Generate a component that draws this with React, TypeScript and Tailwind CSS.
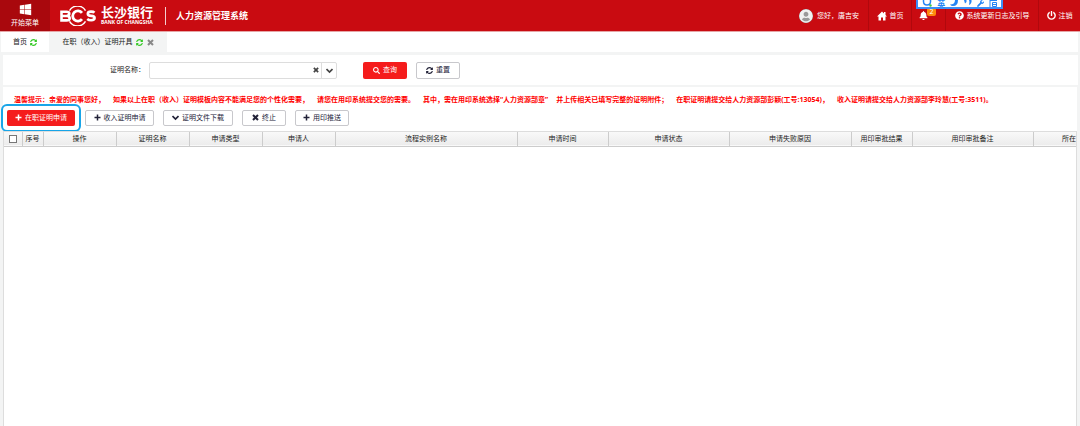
import { FaWindows, FaBell, FaQuestionCircle, FaPowerOff, FaSearch, FaSyncAlt, FaUserCircle, FaWrench } from 'react-icons/fa'

type IconProps = { className?: string }

function PlusIcon({ className }: IconProps) {
  return (
    <svg viewBox="0 0 14 14" className={className} fill="none" stroke="currentColor" strokeWidth="3">
      <path d="M7 1v12M1 7h12" />
    </svg>
  )
}

function CrossIcon({ className }: IconProps) {
  return (
    <svg viewBox="0 0 14 14" className={className} fill="none" stroke="currentColor" strokeWidth="4">
      <path d="M2 2l10 10M12 2L2 12" />
    </svg>
  )
}

function ChevronIcon({ className }: IconProps) {
  return (
    <svg viewBox="0 0 14 14" className={className} fill="none" stroke="currentColor" strokeWidth="3.4">
      <path d="M1 4l6 6 6-6" />
    </svg>
  )
}

function HomeIcon({ className }: IconProps) {
  return (
    <svg viewBox="0 0 20 20" className={className} fill="currentColor">
      <path d="M10 1L0 11h3v8h5v-6h4v6h5v-8h3l-3-3V2h-3v3z" />
    </svg>
  )
}

const columns = [
  { title: '序号', width: 'w-[21px]' },
  { title: '操作', width: 'w-[73px]' },
  { title: '证明名称', width: 'w-[73px]' },
  { title: '申请类型', width: 'w-[73px]' },
  { title: '申请人', width: 'w-[73px]' },
  { title: '流程实例名称', width: 'w-[182px]' },
  { title: '申请时间', width: 'w-[91px]' },
  { title: '申请状态', width: 'w-[121px]' },
  { title: '申请失败原因', width: 'w-[122px]' },
  { title: '用印审批结果', width: 'w-[61px]' },
  { title: '用印审批备注', width: 'w-[121px]' },
]

const actions = [
  { label: '收入证明申请', icon: PlusIcon, width: 'w-[69px]' },
  { label: '证明文件下载', icon: ChevronIcon, width: 'w-[70px]' },
  { label: '终止', icon: CrossIcon, width: 'w-[44px]' },
  { label: '用印推送', icon: PlusIcon, width: 'w-[54px]' },
]

const tips = [
  '温馨提示：亲爱的同事您好，',
  '如果以上在职（收入）证明模板内容不能满足您的个性化需要，',
  '请您在用印系统提交您的需要。',
  '其中，需在用印系统选择“人力资源部章”',
  '并上传相关已填写完整的证明附件；',
  '在职证明请提交给人力资源部彭颖(工号:13054)，',
  '收入证明请提交给人力资源部李玲慧(工号:3511)。',
]

function Logo() {
  return (
    <div className="flex items-center gap-[5px] text-white">
      <svg viewBox="0 0 36 20" className="h-5 w-9" fill="none" stroke="currentColor">
        <path d="M1.5 5.800H6.500q2.800 0 2.800 2T6.500 10q3.200 0 3.200 2.200t-3.200 2.200h-5zM1.500 10h5" strokeWidth="2.600" />
        <path d="M9.500 4.600A9.300 9.300 0 0 1 25.500 4.600M9.500 15.400A9.300 9.300 0 0 0 25.500 15.400" strokeWidth="1.500" />
        <path d="M22 6.800A5.200 5.200 0 1 0 22 13.200" strokeWidth="2.800" />
        <path d="M34.500 6.600q-1-1-3.500-1-3.200 0-3.200 2.100 0 2 3.400 2.200 3.400.2 3.400 2.200t-3.400 2.200q-2.600 0-4-1.200" strokeWidth="2.600" />
      </svg>
      <div className="flex flex-col">
        <span className="text-[13px] leading-[13px] font-bold">长沙银行</span>
        <span className="text-[5px] leading-[6px] font-bold">BANK OF CHANGSHA</span>
      </div>
    </div>
  )
}

function InputMethodBar() {
  return (
    <div className="absolute top-0 right-[77px] flex h-[9px] w-[87px] items-center justify-between border-2 border-t-0 border-[#3d8ef5] bg-white px-1 text-[#2484f5]">
      <svg viewBox="0 0 10 7" className="h-[7px] w-[10px]" fill="none" stroke="currentColor" strokeWidth="1.5">
        <path d="M1.500 0v1.500q0 3.500 3.500 3.500t3.500-3.500V0" />
        <circle cx="8.500" cy="5.500" r="1.200" fill="#3fc44a" stroke="none" />
      </svg>
      <span className="text-[8px] leading-[7px] font-bold">英</span>
      <svg viewBox="0 0 8 7" className="h-[7px] w-2" fill="currentColor">
        <path d="M5 0h3q0 6-5 6-2 0-3-1.500Q5 4.500 5 0z" />
      </svg>
      <svg viewBox="0 0 8 7" className="h-[7px] w-2" fill="currentColor">
        <path d="M0 0h2.500v2L1 3.500zM5 0h2.500q.5 3.500-2.500 5 1-3 0-5z" />
      </svg>
      <FaWrench className="size-[7px]" />
      <svg viewBox="0 0 8 7" className="h-[7px] w-2" fill="none" stroke="currentColor">
        <path d="M1 0v7M1 .5h7M3.500 2.500h4v4h-4zM4 4.500h3" />
      </svg>
    </div>
  )
}

function Header() {
  return (
    <header className="relative flex h-8 items-stretch border-b border-[#e6a5a6] bg-[#c90b11] text-white">
      <button className="flex w-[50px] flex-col items-center justify-center gap-[2px] bg-[#a9080d]">
        <FaWindows className="size-[13px]" />
        <span className="leading-[10px]">开始菜单</span>
      </button>
      <div className="flex items-center pl-[10px]">
        <Logo />
        <div className="ml-3 h-[18px] w-px bg-white/80" />
        <h1 className="ml-[10px] text-[9px] font-bold">人力资源管理系统</h1>
      </div>
      <nav className="ml-auto flex items-stretch">
        <div className="flex items-center gap-1 pr-[9px]">
          <FaUserCircle className="size-[14px] rounded-full bg-[#999] text-[#f1f1f1]" />
          <span>您好，唐吉安</span>
        </div>
        <a href="#home" className="flex w-[43px] items-center justify-center gap-[3px] border-l border-[#b1080d]">
          <HomeIcon className="size-[10px]" />
          首页
        </a>
        <a href="#messages" className="relative flex w-[34px] items-center border-l border-[#b1080d] pl-[7px]">
          <FaBell className="size-[9px]" />
          <span className="absolute top-2 left-[15px] flex h-2 w-[9px] items-center justify-center rounded-xs bg-[#ff8a0c]">2</span>
        </a>
        <a href="#guide" className="flex w-[93px] items-center justify-center gap-[3px] border-l border-[#b1080d]">
          <FaQuestionCircle className="size-[9px]" />
          系统更新日志及引导
        </a>
        <a href="#logout" className="flex w-[42px] items-center justify-center gap-[3px] border-l border-[#b1080d]">
          <FaPowerOff className="size-[9px]" />
          注销
        </a>
      </nav>
      <InputMethodBar />
    </header>
  )
}

export default function App() {
  return (
    <div className="flex min-h-screen flex-col bg-[#f3f4f4] font-['Noto_Sans','Noto_Sans_CJK_SC',sans-serif] text-[7px] leading-[10px] text-[#222]" lang="zh-CN">
      <Header />

      {/* TABS */}
      <div className="flex h-5 items-stretch pr-[2px] pl-px">
        <button className="flex w-12 items-center justify-center gap-[3px] bg-white">
          首页 <FaSyncAlt className="size-[7px] text-[#35c926]" />
        </button>
        <div className="flex w-[118px] items-center justify-center gap-[3px]">
          <button>在职（收入）证明开具</button>
          <FaSyncAlt className="size-[7px] text-[#35c926]" />
          <button aria-label="关闭" className="ml-px"><CrossIcon className="size-[7px] text-[#888]" /></button>
        </div>
        <div className="grow bg-white" />
      </div>

      {/* SEARCH */}
      <form className="mt-[3px] mr-[2px] ml-[3px] flex h-[30px] items-center bg-white pl-[107px]" onSubmit={(e) => e.preventDefault()}>
        <label htmlFor="cert-name" className="w-[39px]">证明名称：</label>
        <div className="flex h-[17px] w-[188px] items-center rounded-xs border border-[#ddd]">
          <input id="cert-name" className="h-full min-w-0 grow px-1 outline-none" />
          <button type="button" aria-label="清空" className="px-[2px]"><CrossIcon className="size-[6px] text-[#444]" /></button>
          <button type="button" aria-label="展开" className="flex h-full w-[15px] items-center justify-center border-l border-[#ddd]">
            <ChevronIcon className="size-[7px] text-[#444]" />
          </button>
        </div>
        <button type="submit" className="ml-[26px] flex h-[17px] w-11 items-center justify-center gap-[3px] rounded-xs bg-[#f51c1c] text-white">
          <FaSearch className="size-[7px]" />
          查询
        </button>
        <button type="reset" className="ml-[9px] flex h-[17px] w-11 items-center justify-center gap-[3px] rounded-xs border border-[#c8c8cc] bg-white text-[#222238]">
          <FaSyncAlt className="size-[7px]" />
          重置
        </button>
      </form>

      {/* LIST */}
      <main className="mt-[2px] mr-[3px] ml-[3px] flex grow flex-col bg-white">
        <p className="flex gap-2 pt-2 pl-[11px] font-bold whitespace-nowrap text-[#ff0000]">
          {tips.map((t) => <span key={t}>{t}</span>)}
        </p>
        <div className="flex h-[26px] items-center gap-1 pb-px">
          <div className="-ml-[2px] rounded-md border-2 border-[#18a5e8] p-1">
            <button className="flex h-4 w-[68px] items-center justify-center gap-[3px] rounded-xs bg-[#f51c1c] text-white">
              <PlusIcon className="size-[7px]" />
              在职证明申请
            </button>
          </div>
          <div className="flex items-center gap-[9px]">
            {actions.map((a) => (
              <button
                key={a.label}
                className={`${a.width} flex h-4 items-center justify-center gap-[3px] rounded-xs border border-[#c8c8cc] bg-white text-[#222238]`}
              >
                <a.icon className="size-[7px]" />
                {a.label}
              </button>
            ))}
          </div>
        </div>
        <div className="grow overflow-hidden border border-b-0 border-[#ddd]">
          <table className="w-full table-fixed border-collapse">
            <thead>
              <tr className="h-[14px] border-b border-[#ccc] bg-linear-to-b from-[#f9f9f9] to-[#ececec]">
                <th className="w-[18px] border-r border-[#ccc] p-0">
                  <input type="checkbox" aria-label="全选" className="mx-auto block size-2 appearance-none border border-[#777] bg-white" />
                </th>
                {columns.map((c) => (
                  <th key={c.title} className={`${c.width} border-r border-[#ccc] p-0 text-center font-normal`}>{c.title}</th>
                ))}
                <th className="p-0 text-right font-normal">所在</th>
              </tr>
            </thead>
            <tbody />
          </table>
        </div>
      </main>
    </div>
  )
}
